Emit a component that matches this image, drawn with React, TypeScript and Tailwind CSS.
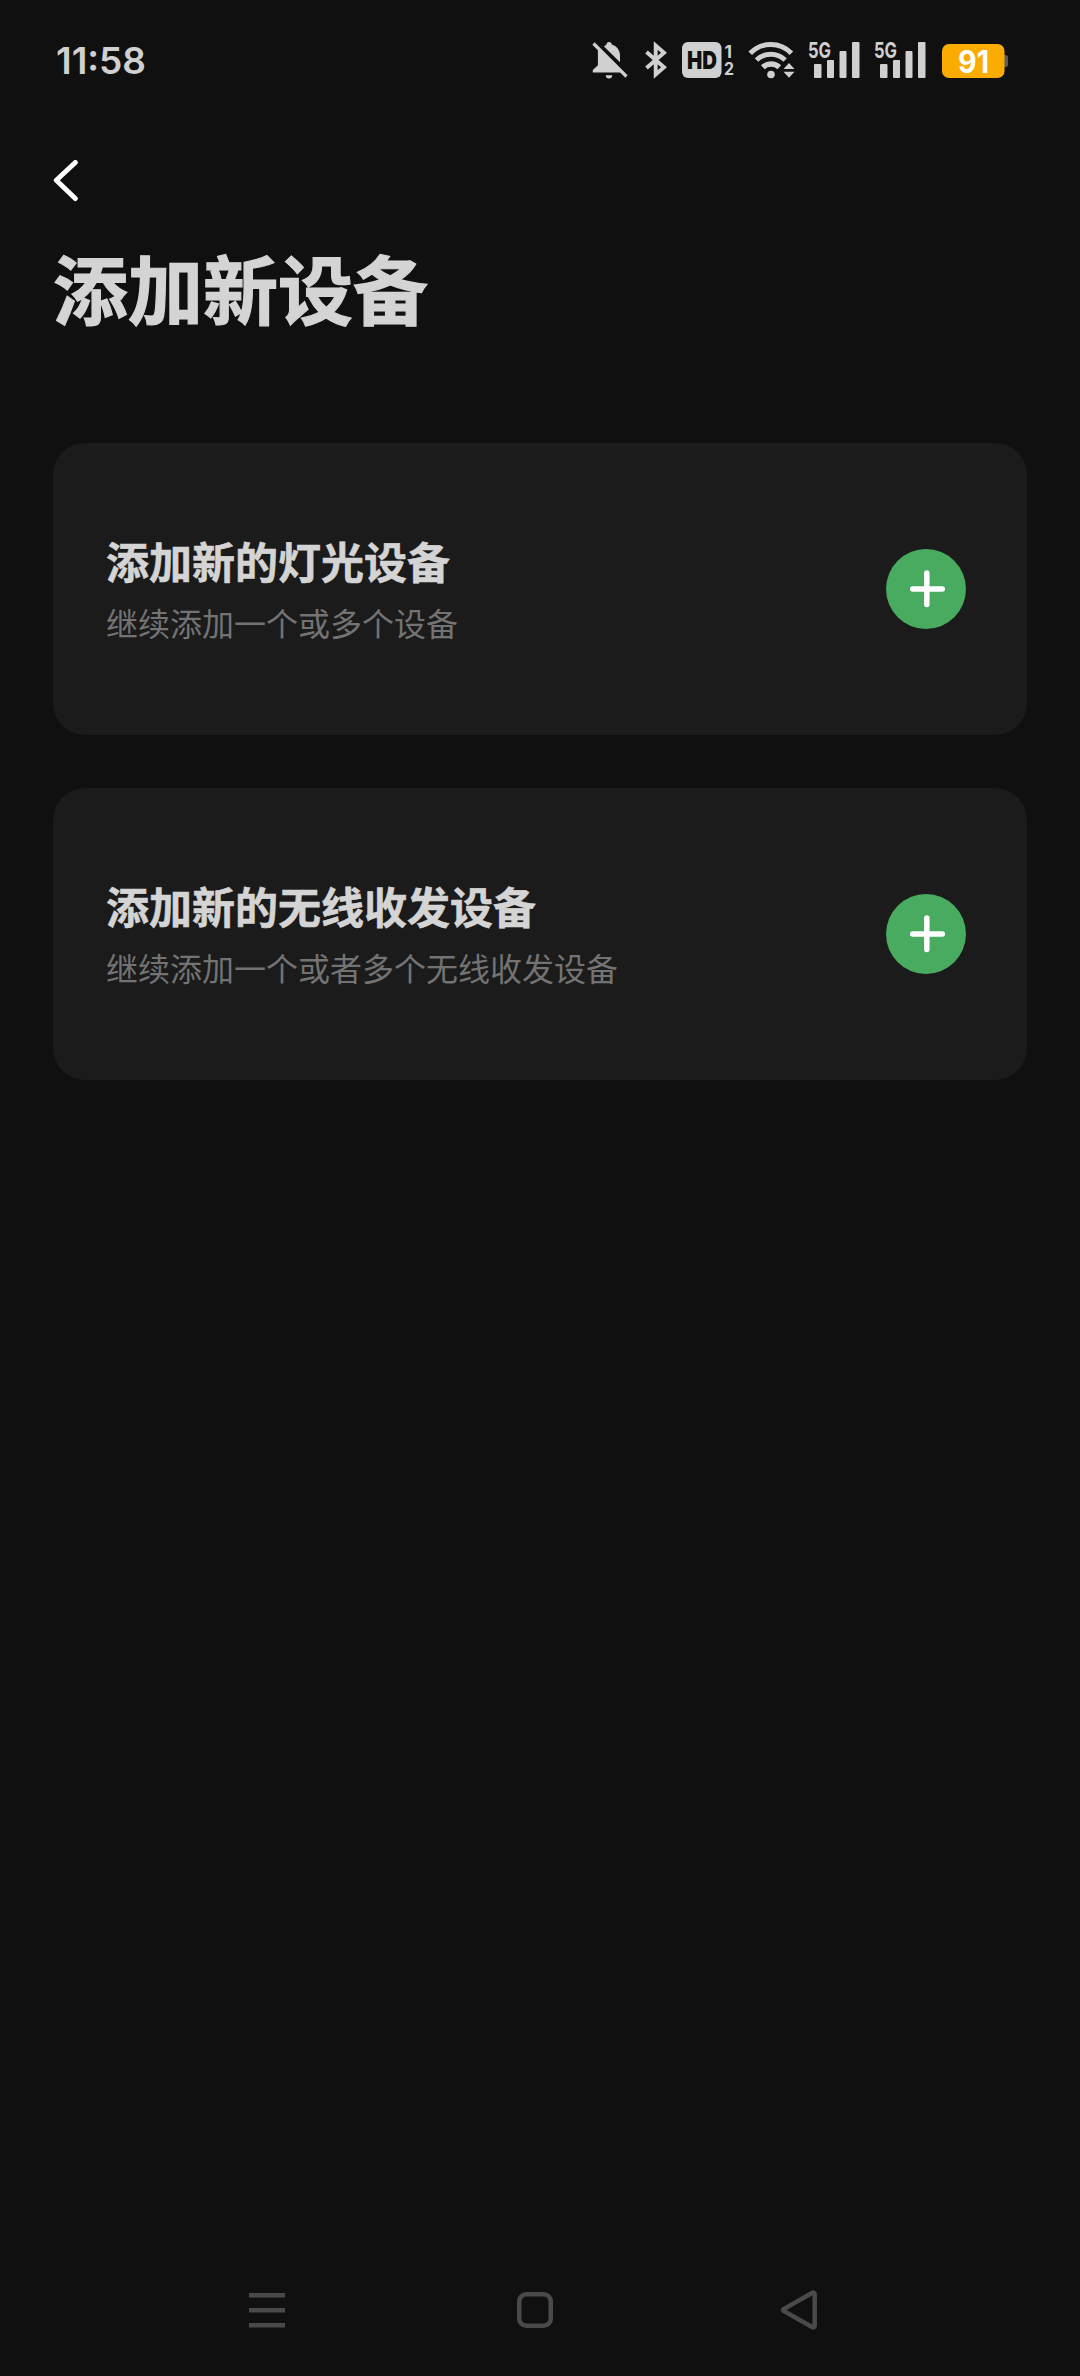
const LATIN = "font-['Inter','Noto_Sans_CJK_SC',sans-serif]";

type DeviceOption = { title: string; description: string };

const OPTIONS: DeviceOption[] = [
  { title: '添加新的灯光设备', description: '继续添加一个或多个设备' },
  { title: '添加新的无线收发设备', description: '继续添加一个或者多个无线收发设备' },
];

function BellOffIcon() {
  return (
    <svg width="36" height="38" viewBox="0 0 36 38" fill="#d0d0d0">
      <path d="M14.5 3.600a2.600 2.600 0 0 1 5.200 0C24.800 5 28 9.500 28 14.500v6.800L12 5.600c.8-.8 1.600-1.500 2.500-2Z" />
      <path d="M6.200 7.500 29 31.500H.8V29l5.100-4.800V9.500Z" />
      <path d="M13.800 34.200h6.400a3.200 3.200 0 0 1-6.400 0Z" />
      <path d="M1.500 2.500 34.500 35.500" stroke="#d0d0d0" strokeWidth="3.200" />
    </svg>
  );
}

function BluetoothIcon() {
  return (
    <svg width="23" height="38" viewBox="0 0 23 38" fill="none" stroke="#d0d0d0" strokeWidth="3.900">
      <path d="M1.500 11 19 26.300 10.700 33.500v-29l8.300 7.200L1.500 27" />
    </svg>
  );
}

function HdIcon() {
  return (
    <svg width="53" height="38" viewBox="0 0 53 38" className={LATIN}>
      <rect x="0" y="1" width="39.500" height="36" rx="6" fill="#d0d0d0" />
      <text x="5" y="28" fontSize="25" fontWeight="900" fill="#101010" textLength="30" lengthAdjust="spacingAndGlyphs">HD</text>
      <text x="42.500" y="16.500" fontSize="17" fontWeight="700" fill="#d0d0d0" textLength="7.500" lengthAdjust="spacingAndGlyphs">1</text>
      <text x="42" y="34" fontSize="17" fontWeight="700" fill="#d0d0d0" textLength="10" lengthAdjust="spacingAndGlyphs">2</text>
    </svg>
  );
}

function WifiIcon() {
  return (
    <svg width="47" height="38" viewBox="0 0 47 38" fill="none" stroke="#d0d0d0" strokeWidth="5">
      <path d="M2.200 12.300a28.500 28.500 0 0 1 41.200 0" />
      <path d="M8.500 19a20.500 20.500 0 0 1 28.600 0" />
      <path d="M14.800 26.200a12.500 12.500 0 0 1 16.500 0" strokeWidth="5.500" />
      <circle cx="23" cy="33.500" r="3.800" fill="#d0d0d0" stroke="none" />
      <path d="m41 22 5.500 6h-11ZM41 36.800l5.500-6h-11Z" fill="#d0d0d0" stroke="none" />
    </svg>
  );
}

function SignalIcon() {
  return (
    <svg width="52" height="38" viewBox="0 0 52 38" fill="#d0d0d0" className={`${LATIN} overflow-visible`}>
      <text x="0" y="16.500" fontSize="22" fontWeight="700" textLength="23" lengthAdjust="spacingAndGlyphs">5G</text>
      <rect x="6" y="23" width="7.500" height="14" rx="1" />
      <rect x="19" y="19" width="7" height="18" rx="1" />
      <rect x="31.500" y="10" width="7" height="27" rx="1" />
      <rect x="44" y="1" width="7.500" height="36" rx="1" />
    </svg>
  );
}

function BatteryIcon() {
  return (
    <svg width="67" height="38" viewBox="0 0 67 38" className={LATIN}>
      <path d="M62 14h1.500a2.500 2.500 0 0 1 2.500 2.500v7a2.500 2.500 0 0 1-2.500 2.500H62Z" fill="#5c5c5c" />
      <rect x="0" y="3" width="62.500" height="34" rx="7" fill="#fbac03" />
      <text x="16" y="31.500" fontSize="31" fontWeight="700" fill="#fff" textLength="31" lengthAdjust="spacingAndGlyphs">91</text>
    </svg>
  );
}

function StatusBar() {
  return (
    <div className="flex h-[120px] items-center pr-[71px] pl-14">
      <span className={`${LATIN} text-[37px] leading-none font-semibold text-[#d0d0d0]`}>11:58</span>
      <div className="ml-auto flex items-center">
        <BellOffIcon />
        <div className="ml-[17px] flex"><BluetoothIcon /></div>
        <div className="ml-3.5 flex"><HdIcon /></div>
        <div className="ml-[13px] flex"><WifiIcon /></div>
        <div className="ml-[13px] flex gap-3.5">
          <SignalIcon />
          <SignalIcon />
        </div>
        <div className="ml-4 flex"><BatteryIcon /></div>
      </div>
    </div>
  );
}

function OptionCard({ title, description }: DeviceOption) {
  return (
    <section className="flex h-[292px] items-center justify-between rounded-[32px] bg-[#1b1b1b] pr-[61px] pl-[53px]">
      <div className="flex flex-col pt-0.5">
        <h2 className="text-[43px] leading-[64px] font-bold text-[#d4d4d4] [-webkit-text-stroke:0.6px_#d4d4d4]">{title}</h2>
        <p className="text-[32px] leading-[60px] font-normal text-[#737373]">{description}</p>
      </div>
      <button type="button" aria-label={title} className="size-20 rounded-full bg-[#48ab5f]">
        <svg width="80" height="80" viewBox="0 0 80 80" fill="none" stroke="#fff" strokeWidth="5.500" strokeLinecap="round">
          <path d="M26.700 40h29.600M40.800 24v31.500" />
        </svg>
      </button>
    </section>
  );
}

function NavBar() {
  return (
    <nav className="flex h-[132px] items-center pl-[249px] text-[#4a4a4a]">
      <svg width="36" height="36" viewBox="0 0 36 36" fill="currentColor">
        <path d="M0 1h36v4.500H0ZM0 16h36v4.500H0ZM0 31h36v4.500H0Z" />
      </svg>
      <svg className="ml-[232px]" width="36" height="36" viewBox="0 0 36 36" fill="none" stroke="currentColor" strokeWidth="4.500">
        <rect x="2.250" y="2.250" width="31.500" height="31.500" rx="7" />
      </svg>
      <svg className="ml-[227px]" width="38" height="40" viewBox="0 0 38 40" fill="none" stroke="currentColor" strokeWidth="4.500" strokeLinejoin="round">
        <path d="M3.600 19.100a1 1 0 0 0 0 1.800L32.500 37.200a1.500 1.500 0 0 0 2.200-1.300V4.100a1.500 1.500 0 0 0-2.200-1.300Z" />
      </svg>
    </nav>
  );
}

export default function App() {
  return (
    <div className="flex h-[2376px] w-[1080px] flex-col bg-[#101010] font-['Noto_Sans_CJK_SC',sans-serif]">
      <StatusBar />
      <header className="flex h-[323px] flex-col items-start px-[53px] pt-10">
        <button type="button" aria-label="返回" className="flex">
          <svg width="26" height="42" viewBox="0 0 26 42" fill="none" stroke="#fff" strokeWidth="5" strokeLinecap="round" strokeLinejoin="round">
            <path d="M22.300 2.500 3.300 20.300l19 18.200" />
          </svg>
        </button>
        <h1 className="mt-[35px] text-[75px] leading-[100px] font-bold text-[#d4d4d4] [-webkit-text-stroke:1.2px_#d4d4d4]">添加新设备</h1>
      </header>
      <main className="flex flex-1 flex-col gap-[53px] px-[53px]">
        {OPTIONS.map((option) => (
          <OptionCard key={option.title} {...option} />
        ))}
      </main>
      <NavBar />
    </div>
  );
}
